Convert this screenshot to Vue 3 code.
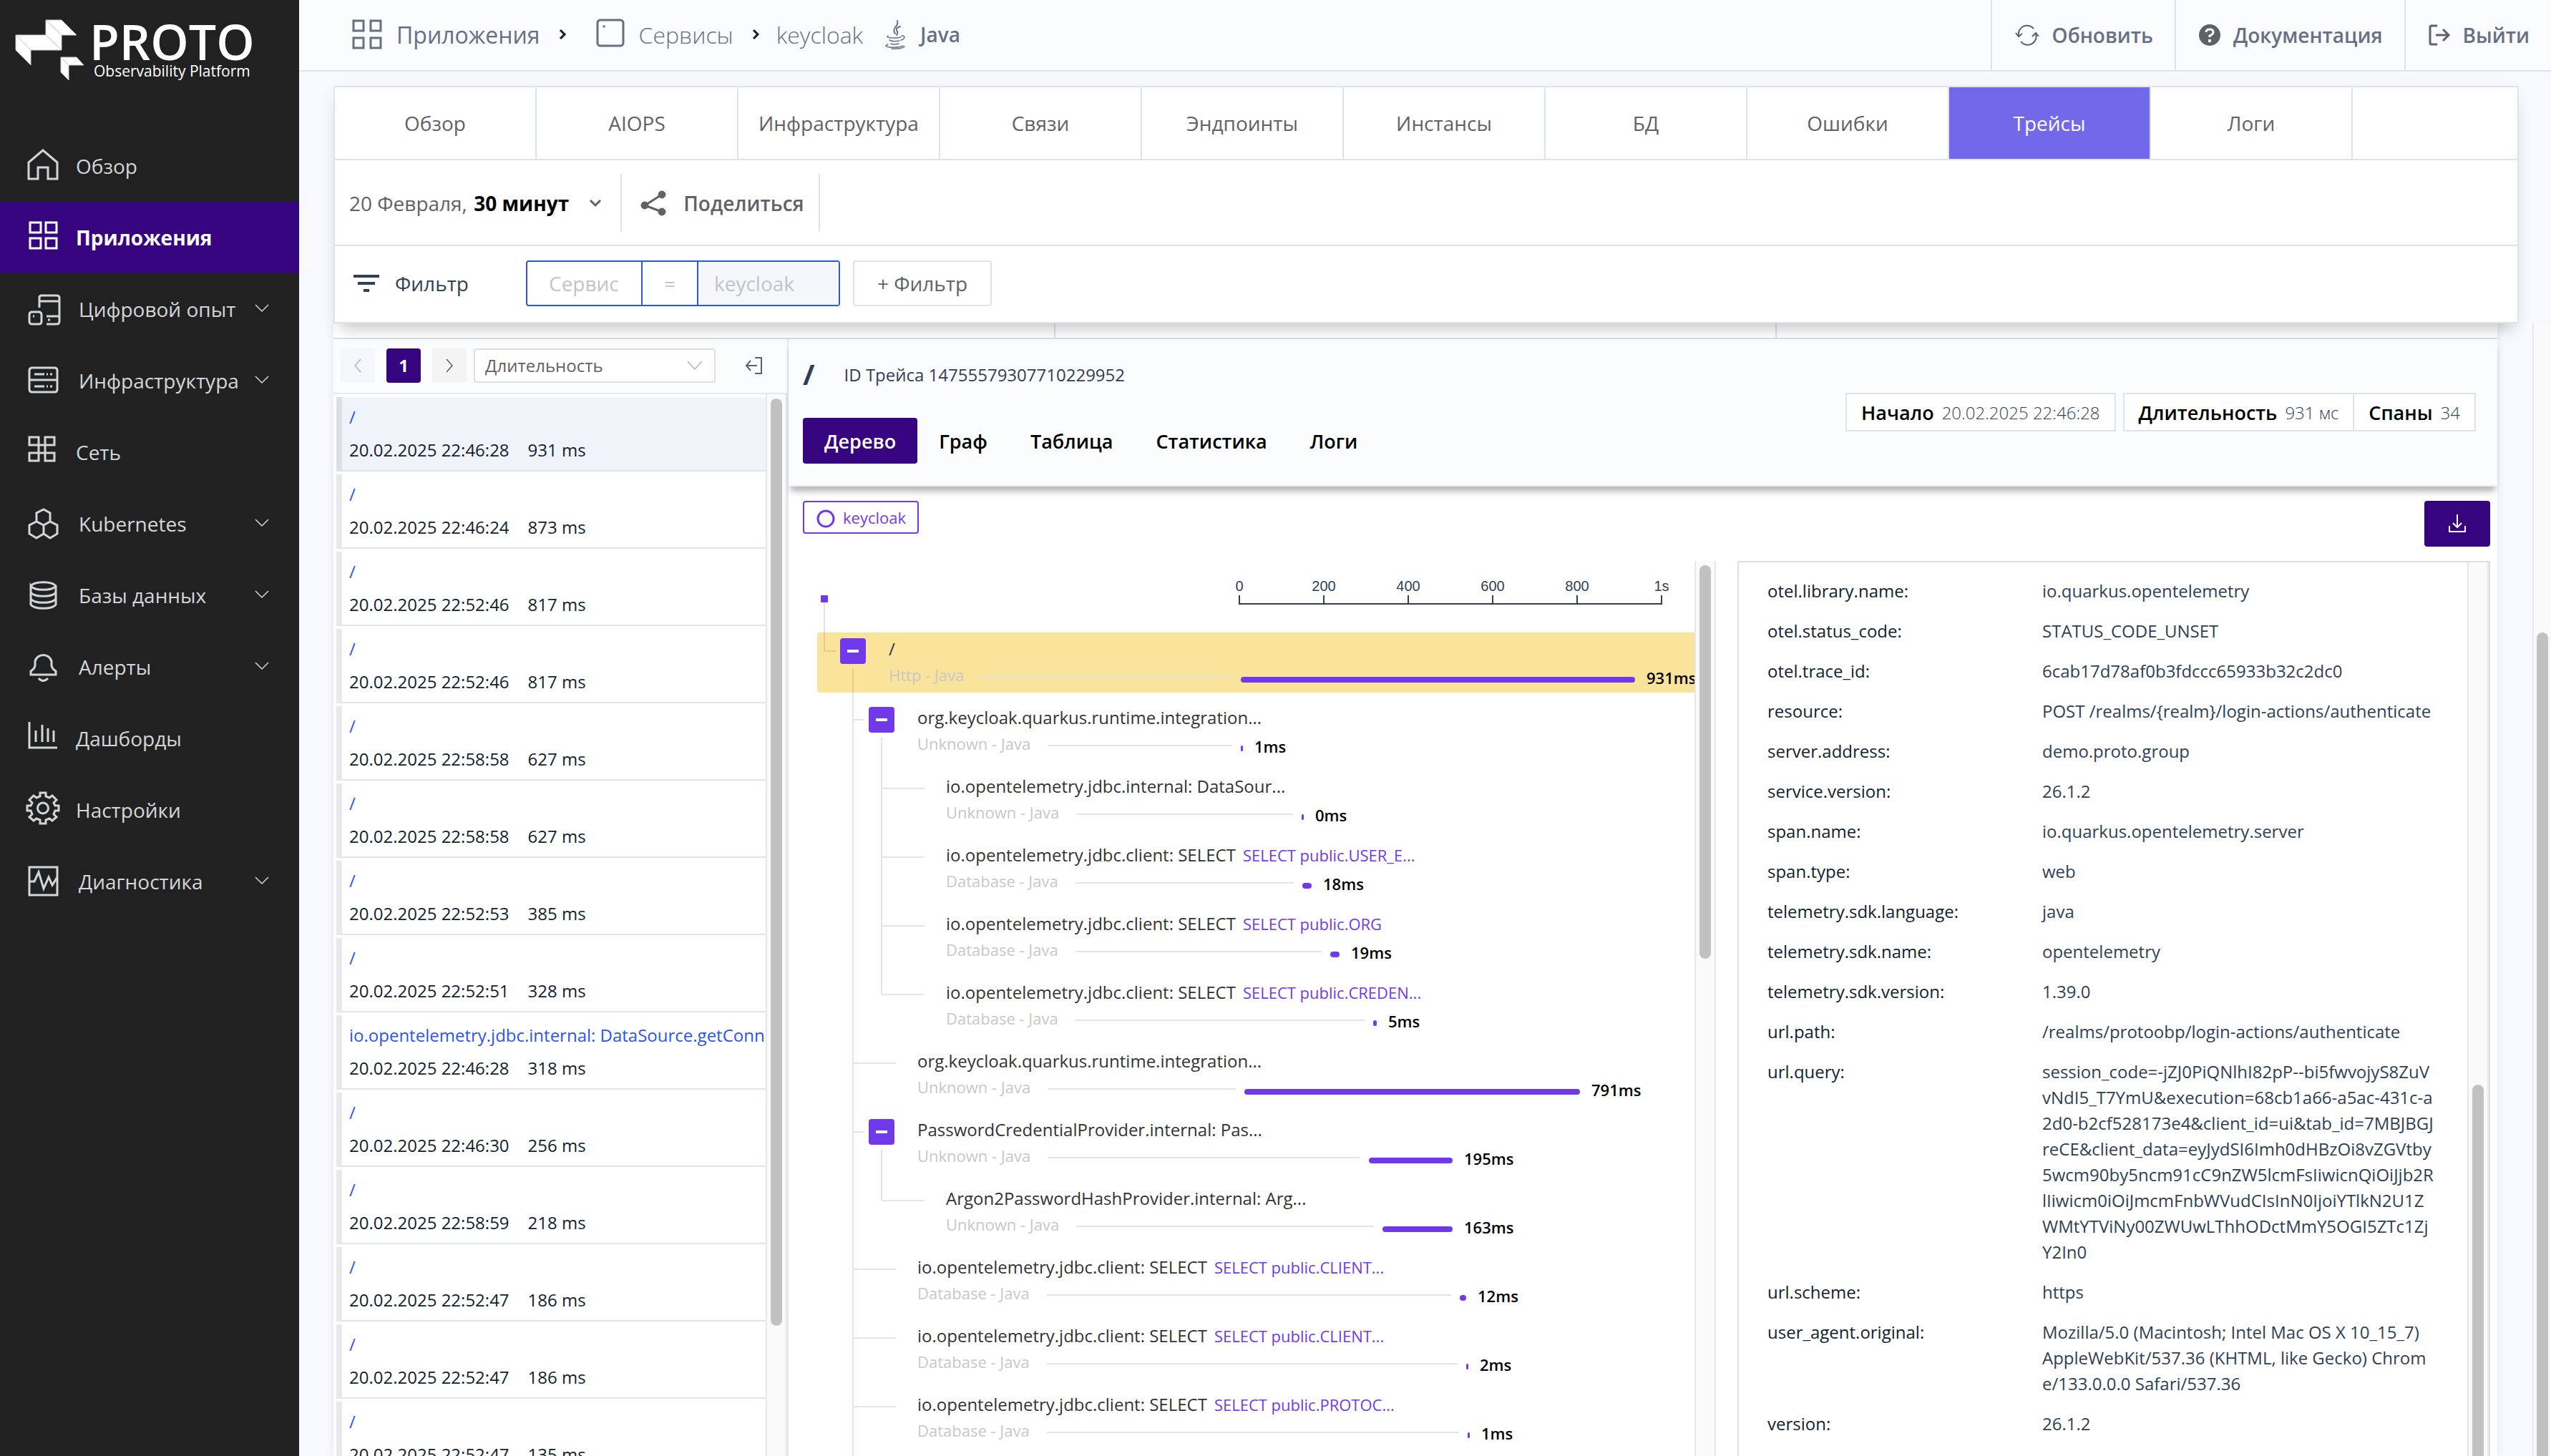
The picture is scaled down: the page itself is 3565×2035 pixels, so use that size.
<script setup>
import { ref, computed } from 'vue'

const menu = [
  { title: 'Обзор', icon: 'M4 44V21L24 4 44 21V44H31V28H17V44Z' },
  { title: 'Приложения', active: true, icon: 'M6 5H21V19H6ZM28 5H43V19H28ZM6 27H21V41H6ZM28 27H43V41H28Z' },
  {
    title: 'Цифровой опыт',
    expandable: true,
    icon: 'M19 24V10Q19 7 22 7H43Q47 7 47 10V43Q47 47 43 47H29M19 15H47M29 36H46M9 30H18Q22 30 22 34V43Q22 47 18 47H9Q5 47 5 43V34Q5 30 9 30ZM10 36H12M31 41H34',
  },
  {
    title: 'Инфраструктура',
    expandable: true,
    icon: 'M9 8H40Q44 8 44 12V38Q44 42 40 42H9Q5 42 5 38V12Q5 8 9 8ZM5 25H44M12 17H26M29 17H31M34 17H37M12 34H26M29 34H31M34 34H37',
  },
  { title: 'Сеть', icon: 'M5 5H18V38H5V27H40V38H27V5H40V16H5Z' },
  {
    title: 'Kubernetes',
    expandable: true,
    icon: 'M15 23V11L25 6 34 11V23M25 28L34 23 44 28V40L34 46 25 40ZM25 28L15 23 5 28V40L15 46 25 40',
  },
  {
    title: 'Базы данных',
    expandable: true,
    icon: 'M7 13A18 7 0 0 1 42 13A18 7 0 0 1 7 13V39A18 7 0 0 0 42 39V13M7 22A18 7 0 0 0 42 22M7 31A18 7 0 0 0 42 31',
  },
  {
    title: 'Алерты',
    expandable: true,
    icon: 'M7 37V32Q13 28 13 24V18A12 12 0 0 1 36 18V24Q36 28 42 32V37ZM18 42Q24 49 31 42',
  },
  { title: 'Дашборды', icon: 'M5 3V39H44M14 15V31M23 7V31M31 12V31M39 15V31' },
  {
    title: 'Настройки',
    icon: 'M20 2H28V7L33 9 37 6 43 12 39 16 41 20H46V27H41L39 32 43 36 37 41 33 38 28 40V45H20V40L15 38 11 41 5 36 9 32 7 27H2V20H7L9 16 5 12 11 6 15 9 20 7ZM24 16A7 7 0 1 1 24 31A7 7 0 1 1 24 16',
  },
  { title: 'Диагностика', expandable: true, icon: 'M5 6H44V45H5ZM5 26H12L18 13 25 36 32 20 37 31 44 20' },
]

const serviceTabs = ['Обзор', 'AIOPS', 'Инфраструктура', 'Связи', 'Эндпоинты', 'Инстансы', 'БД', 'Ошибки', 'Трейсы', 'Логи']
const activeServiceTab = ref('Трейсы')

const traces = [
  ['/', '22:46:28', 931],
  ['/', '22:46:24', 873],
  ['/', '22:52:46', 817],
  ['/', '22:52:46', 817],
  ['/', '22:58:58', 627],
  ['/', '22:58:58', 627],
  ['/', '22:52:53', 385],
  ['/', '22:52:51', 328],
  ['io.opentelemetry.jdbc.internal: DataSource.getConnection', '22:46:28', 318],
  ['/', '22:46:30', 256],
  ['/', '22:58:59', 218],
  ['/', '22:52:47', 186],
  ['/', '22:52:47', 186],
  ['/', '22:52:47', 135],
]

const viewTabs = ['Дерево', 'Граф', 'Таблица', 'Статистика', 'Логи']
const activeView = ref('Дерево')

// Timeline geometry: the axis starts at AXIS_X inside the tree pane.
const AXIS_X = 590
const PX_PER_MS = 0.59
const TEXT_X = 100
const STEP = 40

const jdbc = 'io.opentelemetry.jdbc.client: SELECT'
const runtime = 'org.keycloak.quarkus.runtime.integration...'
const spans = [
  { level: 0, name: '/', kind: 'Http - Java', start: 3, ms: 931, open: true, last: true, current: true },
  { level: 1, name: runtime, kind: 'Unknown - Java', start: 3, ms: 1, open: true },
  { level: 2, name: 'io.opentelemetry.jdbc.internal: DataSour...', kind: 'Unknown - Java', start: 147, ms: 0 },
  { level: 2, name: jdbc, sql: 'SELECT public.USER_E...', kind: 'Database - Java', start: 149, ms: 18 },
  { level: 2, name: jdbc, sql: 'SELECT public.ORG', kind: 'Database - Java', start: 215, ms: 19 },
  { level: 2, name: jdbc, sql: 'SELECT public.CREDEN...', kind: 'Database - Java', start: 317, ms: 5, last: true },
  { level: 1, name: runtime, kind: 'Unknown - Java', start: 12, ms: 791 },
  { level: 1, name: 'PasswordCredentialProvider.internal: Pas...', kind: 'Unknown - Java', start: 307, ms: 195, open: true },
  { level: 2, name: 'Argon2PasswordHashProvider.internal: Arg...', kind: 'Unknown - Java', start: 339, ms: 163, last: true },
  { level: 1, name: jdbc, sql: 'SELECT public.CLIENT...', kind: 'Database - Java', start: 522, ms: 12 },
  { level: 1, name: jdbc, sql: 'SELECT public.CLIENT...', kind: 'Database - Java', start: 537, ms: 2 },
  { level: 1, name: jdbc, sql: 'SELECT public.PROTOC...', kind: 'Database - Java', start: 541, ms: 1 },
]

function guides(span) {
  const x = 10 + STEP * span.level
  let d = ''
  for (let k = 1; k < span.level; k++) d += `M${10 + STEP * k} 0V96`
  d += span.last ? `M${x} 0V26` : `M${x} 0V96`
  d += `M${x} 26H${x + (span.open ? 16 : 60)}`
  if (span.open) d += `M${x + STEP} 50V96`
  return d
}

const rows = computed(() =>
  spans.map((s) => ({
    ...s,
    guideWidth: TEXT_X + STEP * s.level,
    path: guides(s),
    leadWidth: Math.round(AXIS_X + s.start * PX_PER_MS) - 12 - TEXT_X - STEP * s.level,
    barWidth: Math.max(3, Math.round(s.ms * PX_PER_MS) + 2),
  }))
)

const ticks = ['0', '200', '400', '600', '800', '1s']

const attributes = [
  ['otel.library.name', 'io.quarkus.opentelemetry'],
  ['otel.status_code', 'STATUS_CODE_UNSET'],
  ['otel.trace_id', '6cab17d78af0b3fdccc65933b32c2dc0'],
  ['resource', 'POST /realms/{realm}/login-actions/authenticate'],
  ['server.address', 'demo.proto.group'],
  ['service.version', '26.1.2'],
  ['span.name', 'io.quarkus.opentelemetry.server'],
  ['span.type', 'web'],
  ['telemetry.sdk.language', 'java'],
  ['telemetry.sdk.name', 'opentelemetry'],
  ['telemetry.sdk.version', '1.39.0'],
  ['url.path', '/realms/protoobp/login-actions/authenticate'],
  [
    'url.query',
    'session_code=-jZJ0PiQNlhI82pP--bi5fwvojyS8ZuVvNdI5_T7YmU&execution=68cb1a66-a5ac-431c-a2d0-b2cf528173e4&client_id=ui&tab_id=7MBJBGJreCE&client_data=eyJydSI6Imh0dHBzOi8vZGVtby5wcm90by5ncm91cC9nZW5lcmFsIiwicnQiOiJjb2RlIiwicm0iOiJmcmFnbWVudCIsInN0IjoiYTlkN2U1ZWMtYTViNy00ZWUwLThhODctMmY5OGI5ZTc1ZjY2In0',
  ],
  ['url.scheme', 'https'],
  [
    'user_agent.original',
    'Mozilla/5.0 (Macintosh; Intel Mac OS X 10_15_7)\nAppleWebKit/537.36 (KHTML, like Gecko) Chrome/133.0.0.0 Safari/537.36',
  ],
  ['version', '26.1.2'],
]
</script>

<template>
  <div class="app">
    <aside class="sidebar">
      <div class="logo">
        <svg class="logo-mark" width="96" height="86" viewBox="22 27 96 86" fill="#fff" stroke="#c9cdd0" stroke-width="1" aria-hidden="true">
          <path d="M64 28H86L107 49H86Z" />
          <path d="M64 28L86 49V70L64 49Z" />
          <path d="M22 49H64L86 70H43Z" />
          <path d="M22 49L43 70V91L22 70Z" />
          <path d="M85 80H107L117 91H96Z" />
          <path d="M85 80L96 91V112L85 101Z" />
        </svg>
        <div class="logo-text">
          <span class="logo-name">PROTO</span>
          <span class="logo-sub">Observability Platform</span>
        </div>
      </div>
      <nav class="menu">
        <a
          v-for="item in menu"
          :key="item.title"
          href="#"
          class="menu-item"
          :class="{ active: item.active, expandable: item.expandable }"
        >
          <svg class="menu-icon" width="48" height="48" viewBox="0 0 48 48" fill="none" stroke="currentColor" stroke-width="3" aria-hidden="true">
            <path :d="item.icon" />
          </svg>
          <span class="menu-label">{{ item.title }}</span>
          <svg v-if="item.expandable" class="menu-chevron" width="20" height="12" viewBox="0 0 20 12" fill="none" stroke="currentColor" stroke-width="1.5" aria-hidden="true">
            <path d="M1 1L10 10 19 1" />
          </svg>
        </a>
      </nav>
    </aside>

    <div class="main">
      <header class="topbar">
        <nav class="crumbs">
          <svg class="crumb-icon" width="42" height="42" viewBox="0 0 42 42" fill="none" stroke="#667085" stroke-width="3" aria-hidden="true">
            <path d="M2 2H16V16H2ZM26 2H40V16H26ZM2 26H16V40H2ZM26 26H40V40H26Z" />
          </svg>
          <a href="#" class="crumb">Приложения</a>
          <svg class="crumb-sep" width="10" height="16" viewBox="0 0 10 16" fill="none" stroke="#1c1c1c" stroke-width="3" aria-hidden="true"><path d="M2 2L8 8 2 14" /></svg>
          <svg class="crumb-icon service" width="40" height="40" viewBox="0 0 40 40" fill="none" stroke="#667085" stroke-width="3" aria-hidden="true">
            <rect x="2" y="2" width="36" height="36" rx="4" />
            <rect x="10" y="10" width="2" height="2" fill="#667085" stroke-width="1" />
          </svg>
          <a href="#" class="crumb light">Сервисы</a>
          <svg class="crumb-sep" width="10" height="16" viewBox="0 0 10 16" fill="none" stroke="#1c1c1c" stroke-width="3" aria-hidden="true"><path d="M2 2L8 8 2 14" /></svg>
          <a href="#" class="crumb light last">keycloak</a>
          <svg class="java" width="30" height="40" viewBox="0 0 30 40" fill="none" stroke="#667085" stroke-width="2" stroke-linecap="round" aria-hidden="true">
            <path d="M18 1C21 9 9 11 15 19M22 9C16 11 16 13 18 16Q19 18 17 21" />
            <path d="M5 22Q1 25 14 25 20 25 23 24M7 28Q12 31 21 29M9 33Q13 35 20 33M24 22Q30 22 27 26 25 28 23 28" stroke-width="1.5" />
            <path d="M5 34Q-2 37 8 38 20 39 26 36M10 40Q24 41 28 37" stroke-width="1.5" />
          </svg>
          <span class="crumb-lang">Java</span>
        </nav>
        <div class="top-actions">
          <button class="top-btn">
            <svg width="34" height="30" viewBox="0 0 34 30" fill="none" stroke="#5f6166" stroke-width="2" aria-hidden="true">
              <path d="M5 16A12 12 0 0 1 26 6M29 13A12 12 0 0 1 8 24M1 12L5 17 10 13M24 17L29 12 33 17" />
            </svg>
            Обновить
          </button>
          <button class="top-btn">
            <svg width="30" height="30" viewBox="0 0 30 30" aria-hidden="true">
              <circle cx="15" cy="15" r="15" fill="#5f6166" />
              <path d="M10 11Q10 7 15 7 20 7 20 11 20 14 15 16V18" fill="none" stroke="#fff" stroke-width="3" />
              <rect x="13" y="21" width="4" height="4" fill="#fff" />
            </svg>
            Документация
          </button>
          <button class="top-btn">
            <svg width="30" height="30" viewBox="0 0 30 30" fill="none" stroke="#5f6166" stroke-width="3" aria-hidden="true">
              <path d="M12 2H4Q2 2 2 4V26Q2 28 4 28H12M10 15H28M20 7L28 15 20 23" />
            </svg>
            Выйти
          </button>
        </div>
      </header>

      <section class="control-panel">
        <div class="service-tabs" role="tablist">
          <button
            v-for="tab in serviceTabs"
            :key="tab"
            class="service-tab"
            :class="{ active: tab === activeServiceTab }"
            role="tab"
            @click="activeServiceTab = tab"
          >
            {{ tab }}
          </button>
        </div>
        <div class="period-row">
          <button class="period">
            <span>20 Февраля, <b>30 минут</b></span>
            <svg width="18" height="12" viewBox="0 0 18 12" fill="none" stroke="#5f6166" stroke-width="3" aria-hidden="true"><path d="M2 2L9 9 16 2" /></svg>
          </button>
          <button class="share">
            <svg width="36" height="36" viewBox="0 0 36 36" fill="#5f6166" stroke="#5f6166" aria-hidden="true">
              <path d="M6 21L30 6M6 21L30 30" fill="none" stroke-width="3" />
              <circle cx="30" cy="6" r="5" />
              <circle cx="6" cy="21" r="5" />
              <circle cx="30" cy="30" r="5" />
            </svg>
            Поделиться
          </button>
        </div>
        <div class="filter-row">
          <svg width="36" height="24" viewBox="0 0 36 24" fill="#303f55" aria-hidden="true">
            <path d="M0 0H36V4H0ZM6 10H30V14H6ZM14 20H22V24H14Z" />
          </svg>
          <span class="filter-title">Фильтр</span>
          <div class="filter-group">
            <input class="f-field" type="text" placeholder="Сервис" aria-label="Поле фильтра" />
            <input class="f-op" type="text" placeholder="=" aria-label="Оператор" />
            <input class="f-value" type="text" placeholder="keycloak" aria-label="Значение" />
          </div>
          <button class="add-filter">+ Фильтр</button>
        </div>
      </section>

      <div class="content">
        <div class="card">
          <div class="strip"><i></i><i></i><i></i></div>
          <div class="trace-view">
            <section class="trace-list">
              <div class="toolbar">
                <button class="page-btn disabled" aria-label="Назад">
                  <svg width="12" height="20" viewBox="0 0 12 20" fill="none" stroke="#c0c4cc" stroke-width="2"><path d="M10 1L2 10 10 19" /></svg>
                </button>
                <button class="page-btn current">1</button>
                <button class="page-btn" aria-label="Вперёд">
                  <svg width="12" height="20" viewBox="0 0 12 20" fill="none" stroke="#5f6166" stroke-width="1.5"><path d="M2 1L10 10 2 19" /></svg>
                </button>
                <div class="sort">
                  <select aria-label="Сортировка">
                    <option>Длительность</option>
                  </select>
                  <svg class="sort-chevron" width="22" height="14" viewBox="0 0 22 14" fill="none" stroke="#c0c4cc" stroke-width="2" aria-hidden="true"><path d="M1 1L11 12 21 1" /></svg>
                </div>
                <button class="collapse" aria-label="Свернуть">
                  <svg width="26" height="26" viewBox="0 0 26 26" fill="none" stroke="#5f6166" stroke-width="2"><path d="M14 2H23V24H14M17 13H2M8 6L2 13 8 20" /></svg>
                </button>
              </div>
              <div class="list-body">
                <ul class="list">
                  <li v-for="(t, i) in traces" :key="i" class="trace" :class="{ selected: i === 0 }">
                    <a href="#" class="trace-name">{{ t[0] }}</a>
                    <div class="trace-meta"><span>20.02.2025 {{ t[1] }}</span><span>{{ t[2] }} ms</span></div>
                  </li>
                </ul>
                <div class="track list-track"><div class="thumb"></div></div>
              </div>
            </section>

            <section class="trace-detail">
              <header class="detail-head">
                <div>
                  <div class="detail-title"><b>/</b><span>ID Трейса 14755579307710229952</span></div>
                  <div class="view-tabs" role="tablist">
                    <button
                      v-for="tab in viewTabs"
                      :key="tab"
                      class="view-tab"
                      :class="{ active: tab === activeView }"
                      role="tab"
                      @click="activeView = tab"
                    >
                      {{ tab }}
                    </button>
                  </div>
                </div>
                <div class="stats">
                  <div class="stat-box"><span class="stat">Начало <em>20.02.2025 22:46:28</em></span></div>
                  <div class="stat-box">
                    <span class="stat">Длительность <em>931 мс</em></span>
                    <span class="stat">Спаны <em>34</em></span>
                  </div>
                </div>
              </header>

              <div class="legend-row">
                <button class="legend">
                  <svg width="26" height="26" viewBox="0 0 26 26" aria-hidden="true"><circle cx="13" cy="13" r="11" fill="none" stroke="#7239ea" stroke-width="3" /></svg>
                  keycloak
                </button>
                <button class="download" aria-label="Скачать">
                  <svg width="24" height="26" viewBox="0 0 24 26" fill="none" stroke="#fff" stroke-width="2"><path d="M12 0V18M6 12L12 18 18 12M1 16V24H23V16" /></svg>
                </button>
              </div>

              <div class="panes">
                <div class="tree-pane">
                  <div class="tree">
                    <svg class="axis" width="1226" height="100" viewBox="0 0 1226 100" aria-hidden="true">
                      <rect x="5" y="48" width="10" height="10" rx="1" fill="#7239ea" />
                      <path d="M10 58V100" stroke="#000" stroke-opacity=".1" stroke-width="2" />
                      <path d="M590 48V60H1180V48M708 48V60M826 48V60M944 48V60M1062 48V60" fill="none" stroke="#303f55" stroke-width="2" />
                      <text v-for="(t, i) in ticks" :key="t" :x="590 + 118 * i" y="42">{{ t }}</text>
                    </svg>
                    <ul class="rows">
                      <li v-for="(r, i) in rows" :key="i" class="span-row" :class="{ highlighted: r.current }">
                        <div class="gutter">
                          <svg :width="r.guideWidth" height="96" fill="none" stroke="#000" stroke-opacity=".1" stroke-width="2" aria-hidden="true"><path :d="r.path" /></svg>
                          <button v-if="r.open" class="toggle" aria-label="Свернуть узел"></button>
                        </div>
                        <div class="span-body">
                          <div class="span-name">{{ r.name }}<span v-if="r.sql" class="sql">{{ r.sql }}</span></div>
                          <div class="span-meta">
                            <div class="lead" :style="{ width: r.leadWidth + 'px' }"><span>{{ r.kind }}</span><i></i></div>
                            <div class="bar" :style="{ width: r.barWidth + 'px' }"></div>
                            <span class="ms">{{ r.ms }}ms</span>
                          </div>
                        </div>
                      </li>
                    </ul>
                  </div>
                  <div class="track tree-track"><div class="thumb"></div></div>
                </div>
                <div class="attrs-pane">
                  <div class="attrs-scroll">
                    <table class="attrs">
                      <tbody>
                        <tr v-for="a in attributes" :key="a[0]">
                          <th scope="row">{{ a[0] }}:</th>
                          <td>{{ a[1] }}</td>
                        </tr>
                      </tbody>
                    </table>
                  </div>
                  <div class="track attrs-track"><div class="thumb"></div></div>
                </div>
              </div>
            </section>
          </div>
        </div>
        <div class="track page-track"><div class="thumb"></div></div>
      </div>
    </div>
  </div>
</template>

<style>
body {
  margin: 0;
  background: #f7f9fc;
}
</style>

<style scoped>
.app {
  display: flex;
  height: 100vh;
  overflow: hidden;
  font-family: 'Open Sans', 'Noto Sans', sans-serif;
  font-size: 28px;
  color: #606266;
  background: #f7f9fc;
}
.app * {
  box-sizing: border-box;
}
button,
input,
select {
  font: inherit;
  color: inherit;
  background: none;
  border: 0;
  padding: 0;
  margin: 0;
  border-radius: 0;
}
button {
  display: flex;
  align-items: center;
  justify-content: center;
  cursor: pointer;
}
a {
  color: inherit;
  text-decoration: none;
}
ul {
  list-style: none;
  margin: 0;
  padding: 0;
}
svg {
  display: block;
  flex: none;
  overflow: visible;
}

/* Sidebar */
.sidebar {
  flex: none;
  width: 418px;
  background: #212121;
  color: #d3d6d9;
}
.logo {
  display: flex;
  height: 182px;
  padding: 27px 0 0 22px;
  color: #fff;
}
.logo-text {
  display: flex;
  flex-direction: column;
  padding-left: 7px;
}
.logo-name {
  font-size: 68px;
  line-height: 62px;
  font-weight: 600;
}
.logo-sub {
  padding-left: 6px;
  font-size: 21px;
  line-height: 20px;
}
.menu-item {
  display: flex;
  align-items: center;
  height: 100px;
  padding: 0 42px 0 36px;
}
.menu-icon {
  align-self: flex-start;
  margin-top: 24px;
}
.menu-label {
  flex: 1;
  margin-left: 22px;
  white-space: nowrap;
}
.expandable .menu-label {
  margin-left: 26px;
}
.menu-item.active {
  background: #370480;
  color: #fff;
  font-weight: 700;
}
.menu-chevron {
  margin-bottom: 2px;
}

/* Top bar */
.main {
  flex: 1;
  min-width: 0;
  display: flex;
  flex-direction: column;
}
.topbar {
  flex: none;
  display: flex;
  justify-content: space-between;
  height: 100px;
  background: #fbfcfe;
  border-bottom: 2px solid #dfe4ea;
  color: #667085;
}
.crumbs {
  display: flex;
  align-items: center;
  padding: 0 0 2px 74px;
  font-size: 32px;
}
.crumb {
  margin-left: 20px;
}
.crumb.light {
  font-weight: 300;
}
.crumb.last {
  margin-left: 0;
}
.crumb-sep {
  margin: 0 24px 0 26px;
}
.crumb-icon.service {
  margin-left: 18px;
  margin-bottom: 4px;
}
.java {
  margin-left: 30px;
}
.crumb-lang {
  margin-left: 20px;
  font-size: 28px;
  font-weight: 600;
}
.top-actions {
  display: flex;
}
.top-btn {
  gap: 18px;
  padding: 0 30px 0 32px;
  border-left: 2px solid #dfe4ea;
  font-weight: 600;
}

/* Control panel */
.control-panel {
  position: relative;
  z-index: 2;
  flex: none;
  margin: 20px 45px 0 48px;
  background: #fff;
  border: 2px solid #dfe4ea;
  box-shadow: 0 16px 22px -10px rgba(0, 0, 0, 0.22), 0 4px 24px rgba(0, 0, 0, 0.03);
}
.service-tabs {
  display: flex;
  height: 102px;
  border-bottom: 2px solid #dfe4ea;
}
.service-tab {
  width: 282px;
  border-right: 2px solid #dfe4ea;
}
.service-tab.active {
  background: #7367ea;
  color: #fff;
}
.period-row {
  display: flex;
  align-items: center;
  height: 120px;
  border-bottom: 2px solid #dfe4ea;
}
.period {
  height: 80px;
  padding: 2px 26px 0 20px;
  gap: 28px;
  border-right: 2px solid #dfe4ea;
}
.period b {
  margin-left: 2px;
  color: #000;
}
.share {
  height: 80px;
  padding: 2px 20px 0 26px;
  gap: 24px;
  border-right: 2px solid #dfe4ea;
  font-weight: 600;
}
.filter-row {
  display: flex;
  align-items: center;
  height: 106px;
  padding: 0 0 2px 26px;
}
.filter-title {
  width: 205px;
  padding-left: 22px;
  color: #303f55;
}
.filter-group {
  display: flex;
  width: 439px;
  height: 64px;
  border: 2px solid #2b54f6;
  border-radius: 4px;
}
.filter-group input {
  min-width: 0;
}
.filter-group input::placeholder {
  color: #c0c4cc;
  opacity: 1;
}
.f-field {
  width: 159px;
  padding-left: 30px;
}
.filter-group .f-op {
  width: 80px;
  border-left: 2px solid #2b54f6;
  border-right: 2px solid #2b54f6;
  text-align: center;
}
.filter-group .f-value {
  flex: 1;
  padding-left: 22px;
  background: #f5f7fa;
}
.add-filter {
  margin-left: 18px;
  width: 194px;
  height: 64px;
  border: 2px solid #dfe4ea;
  border-radius: 4px;
}

/* Content */
.content {
  flex: 1;
  min-height: 0;
  display: flex;
  padding-left: 48px;
}
.card {
  flex: 1;
  min-width: 0;
  display: flex;
  flex-direction: column;
  margin-right: 49px;
  background: #fff;
  box-shadow: 0 0 12px rgba(0, 0, 0, 0.08);
}
.strip {
  flex: none;
  display: flex;
  height: 22px;
  border-bottom: 2px solid #dcdfe6;
}
.strip i {
  flex: 1;
  border-right: 2px solid #dcdfe6;
}
.strip i:last-child {
  border-right: 0;
}
.trace-view {
  flex: 1;
  min-height: 0;
  display: flex;
}
.track {
  flex: none;
  background: #fafafa;
  border-left: 2px solid #e8e8e8;
  border-right: 2px solid #e8e8e8;
  overflow: hidden;
}
.thumb {
  width: 16px;
  margin: 6px auto 0;
  border-radius: 8px;
  background: #c1c1c1;
}

/* Trace list */
.trace-list {
  flex: none;
  display: flex;
  flex-direction: column;
  width: 636px;
  border-right: 2px solid #e4e7ed;
}
.toolbar {
  flex: none;
  display: flex;
  align-items: center;
  height: 77px;
  padding: 0 0 2px 10px;
  background: #fbfcfe;
  border-bottom: 2px solid #e4e7ed;
  font-size: 24px;
}
.page-btn {
  width: 48px;
  height: 48px;
  margin-right: 16px;
  border-radius: 4px;
  background: #f4f4f5;
}
.page-btn.disabled {
  background: #f5f7fa;
}
.page-btn.current {
  background: #370480;
  color: #fff;
  font-weight: 700;
}
.page-btn:nth-child(3) {
  margin-right: 10px;
}
.sort {
  position: relative;
}
.sort select {
  appearance: none;
  display: block;
  width: 338px;
  height: 48px;
  padding-left: 14px;
  border: 2px solid #dcdfe6;
  border-radius: 4px;
  background: #fff;
}
.sort-chevron {
  position: absolute;
  right: 18px;
  top: 17px;
  pointer-events: none;
}
.collapse {
  margin-left: 41px;
}
.list-body {
  flex: 1;
  min-height: 0;
  display: flex;
  overflow: hidden;
}
.list {
  flex: 1;
  min-width: 0;
  padding-left: 4px;
}
.trace {
  height: 104px;
  margin-top: 4px;
  padding: 5px 0 0 10px;
  border-left: 8px solid #e9e9eb;
  border-bottom: 2px solid #dfe4ea;
  font-size: 24px;
  line-height: 46px;
  white-space: nowrap;
}
.trace.selected {
  background: #f0f3f9;
  border-left-color: #dcdfe6;
}
.trace-name {
  display: block;
  overflow: hidden;
  color: #2b54f6;
}
.trace-meta {
  display: flex;
  gap: 26px;
  color: #122230;
}
.list-track {
  width: 30px;
}
.list-track .thumb {
  height: 1296px;
}

/* Trace detail */
.trace-detail {
  flex: 1;
  min-width: 0;
  display: flex;
  flex-direction: column;
}
.detail-head {
  flex: none;
  position: relative;
  z-index: 1;
  display: flex;
  align-items: center;
  justify-content: space-between;
  padding: 20px 30px 30px 20px;
  height: 206px;
  background: #fbfcfe;
  border-bottom: 2px solid #ebeef5;
  box-shadow: 0 10px 8px -3px rgba(0, 0, 0, 0.28);
}
.detail-title {
  display: flex;
  align-items: center;
  gap: 41px;
  height: 58px;
  margin-bottom: 32px;
  color: #303f55;
  font-size: 24px;
}
.detail-title b {
  font-size: 40px;
  line-height: 58px;
}
.view-tabs {
  display: flex;
  color: #000;
  font-size: 27px;
  font-weight: 600;
}
.view-tab {
  height: 64px;
  padding: 0 30px;
  border-radius: 4px;
}
.view-tab.active {
  background: #370480;
  color: #fff;
}
.stats {
  display: flex;
  gap: 10px;
  margin-top: 10px;
}
.stat-box {
  display: flex;
  height: 54px;
  background: #fff;
  border: 2px solid #dfe4ea;
  color: #000;
  font-size: 27px;
  font-weight: 600;
}
.stat {
  display: flex;
  align-items: center;
  gap: 11px;
  padding: 0 20px;
}
.stat + .stat {
  border-left: 2px solid #dfe4ea;
}
.stat em {
  font-style: normal;
  font-size: 24px;
  font-weight: 300;
  color: #303f55;
}
.legend-row {
  flex: none;
  display: flex;
  justify-content: space-between;
  align-items: flex-start;
  padding: 20px 10px 20px 20px;
}
.legend {
  gap: 11px;
  height: 46px;
  padding: 0 16px 0 17px;
  border: 2px solid #7239ea;
  border-radius: 4px;
  color: #7239ea;
  font-size: 22px;
}
.legend svg {
  margin-top: 4px;
}
.download {
  width: 92px;
  height: 64px;
  border-radius: 4px;
  background: #370480;
}
.panes {
  flex: 1;
  min-height: 0;
  display: grid;
  grid-template-columns: minmax(0, 1256fr) minmax(0, 1052fr);
  gap: 30px;
  padding: 0 10px 0 40px;
}
.tree-pane,
.attrs-pane {
  display: flex;
  min-height: 0;
  overflow: hidden;
}
.tree {
  flex: 1;
  min-width: 0;
  overflow: hidden;
}
.tree-track {
  width: 30px;
}
.tree-track .thumb {
  height: 550px;
}
.axis text {
  font-family: 'Liberation Sans', Arial, sans-serif;
  font-size: 20px;
  fill: #303f55;
  text-anchor: middle;
}
.span-row {
  display: flex;
  height: 84px;
  margin-bottom: 12px;
}
.span-row.highlighted {
  background: #fae39b;
  border-radius: 4px 0 0 4px;
}
.gutter {
  display: grid;
  flex: none;
  height: 96px;
}
.gutter > * {
  grid-area: 1 / 1;
}
.toggle {
  justify-self: end;
  width: 36px;
  height: 36px;
  margin: 8px 32px 0 0;
  border-radius: 4px;
  background: #7239ea;
}
.toggle::before {
  content: '';
  width: 16px;
  height: 4px;
  background: #fff;
}
.span-body {
  padding-top: 5px;
  line-height: 36px;
  white-space: nowrap;
}
.span-name {
  font-size: 24px;
  color: #333;
}
.sql {
  margin-left: 10px;
  font-size: 22px;
  color: #7239ea;
}
.span-meta {
  display: flex;
  align-items: center;
  height: 36px;
  font-size: 22px;
}
.lead {
  flex: none;
  display: flex;
  align-items: center;
  gap: 24px;
  color: #c8c8c8;
}
.lead i {
  flex: 1;
  height: 2px;
  margin-top: 6px;
  background: #e4e4e4;
}
.bar {
  flex: none;
  height: 8px;
  margin: 14px 0 0 12px;
  border-radius: 4px;
  background: #7239ea;
}
.ms {
  margin: 8px 0 0 16px;
  color: #000;
  font-weight: 600;
}
.attrs-pane {
  border: 2px solid #dcdfe6;
  border-bottom: 0;
}
.attrs-scroll {
  flex: 1;
  min-width: 0;
  padding: 12px 43px 0 40px;
  overflow: hidden;
}
.attrs {
  width: 100%;
  border-collapse: collapse;
  table-layout: fixed;
  font-size: 24px;
  line-height: 36px;
}
.attrs th,
.attrs td {
  padding: 10px 0;
  text-align: left;
  vertical-align: top;
  font-weight: 400;
}
.attrs th {
  width: 384px;
  color: #122230;
}
.attrs td {
  color: #303f55;
  word-break: break-all;
  white-space: pre-line;
}
.attrs-track {
  width: 30px;
}
.attrs-track .thumb {
  height: 1000px;
  margin-top: 730px;
}
.page-track {
  width: 26px;
  border-right: 0;
}
.page-track .thumb {
  height: 2000px;
  margin-top: 432px;
}
</style>
